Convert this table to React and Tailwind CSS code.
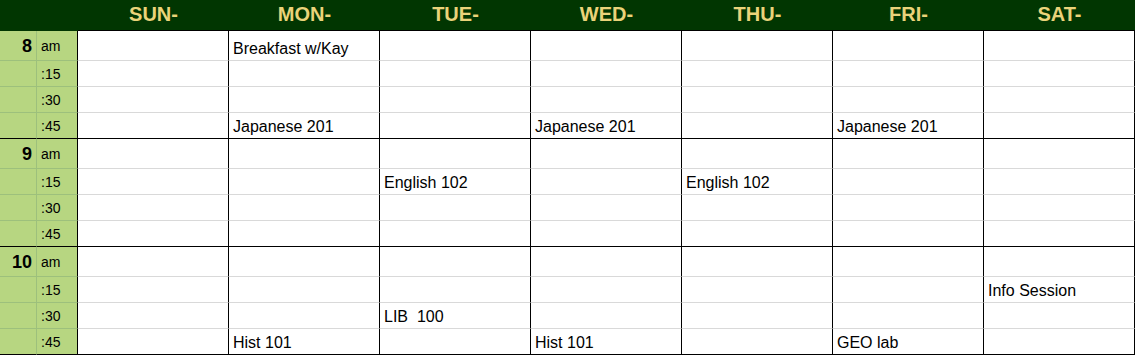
import React from "react";

const days = ["SUN-", "MON-", "TUE-", "WED-", "THU-", "FRI-", "SAT-"];

const events = {
  "0-0-1": "Breakfast w/Kay",
  "0-3-1": "Japanese 201",
  "0-3-3": "Japanese 201",
  "0-3-5": "Japanese 201",
  "1-1-2": "English 102",
  "1-1-4": "English 102",
  "2-1-6": "Info Session",
  "2-2-2": "LIB  100",
  "2-3-1": "Hist 101",
  "2-3-3": "Hist 101",
  "2-3-5": "GEO lab",
};

const hours = ["8", "9", "10"];
const quarters = ["am", ":15", ":30", ":45"];

export default function App() {
  return (
    <div
      className="w-[1135px] h-[355px] bg-white overflow-hidden"
      style={{ fontFamily: '"Liberation Sans", Arial, sans-serif' }}
    >
      <div className="grid grid-cols-[37px_41px_repeat(7,151px)]">
        <div className="col-span-2 h-[31px] bg-[#013601]" />
        {days.map((d) => (
          <div
            key={d}
            className="h-[31px] bg-[#013601] border-b border-black flex items-center justify-center text-[20px] font-bold text-[#ead37a] pb-[2px]"
          >
            {d}
          </div>
        ))}

        {hours.map((h, hi) =>
          quarters.map((q, qi) => {
            const last = qi === 3;
            const rowH = qi === 0 ? "h-[30px]" : "h-[26px]";
            const greenBorder = last ? "border-b-black" : "border-b-[#9dc07c]";
            const whiteBorder = last ? "border-b-black" : "border-b-[#d9d9d9]";
            return (
              <React.Fragment key={h + q}>
                <div
                  className={`${rowH} bg-[#b7d681] border-b border-r border-r-[#9dc07c] ${greenBorder} flex items-center justify-end pr-[4px] text-[18px] font-bold text-black leading-none`}
                >
                  {qi === 0 ? h : ""}
                </div>
                <div
                  className={`${rowH} bg-[#b7d681] border-b border-r border-r-black ${greenBorder} flex items-center pl-[4px] text-[14px] text-black leading-none pt-[1px]`}
                >
                  {q}
                </div>
                {days.map((d, di) => {
                  const ev = events[`${hi}-${qi}-${di}`];
                  return (
                    <div
                      key={d}
                      className={`${rowH} bg-white border-b border-r border-r-black ${whiteBorder} flex items-end pl-[4px] pb-[3px] text-[16px] text-black leading-[16px] whitespace-pre`}
                    >
                      {ev || ""}
                    </div>
                  );
                })}
              </React.Fragment>
            );
          })
        )}
      </div>
    </div>
  );
}
